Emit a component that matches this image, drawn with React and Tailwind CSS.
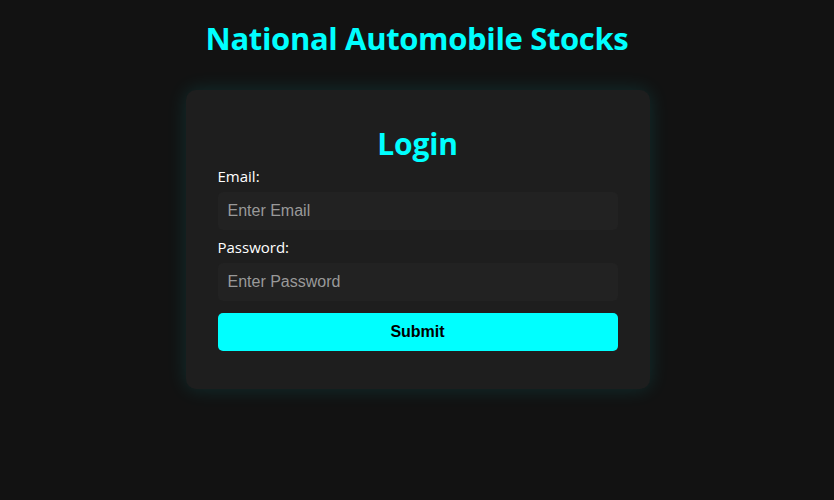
export default function App() {
  return (
    <div className="min-h-[500px] w-full bg-[#121212] flex flex-col items-center" style={{ fontFamily: '"Open Sans", "Noto Sans", sans-serif' }}>
      <h1 className="mt-[18px] text-[31px] leading-[40px] font-bold text-[#00ffff] tracking-[-0.35px]">National Automobile Stocks</h1>
      <div className="mt-[32px] ml-[1px] w-[464px] rounded-[10px] bg-[#1e1e1e] px-[32px] pt-[36px] pb-[38px] shadow-[0_0_20px_rgba(0,255,255,0.12)]">
        <h2 className="text-center text-[30px] leading-[36px] font-bold text-[#00ffff] tracking-[-0.2px]">Login</h2>
        <div className="mt-[4px] text-[15px] leading-[20px] text-white">Email:</div>
        <input
          placeholder="Enter Email"
          className="mt-[6px] block w-full h-[38px] rounded-[5px] bg-[#222222] px-[10px] text-[16px] text-white placeholder:text-[#999999] outline-none"
          style={{ fontFamily: '"Liberation Sans", Arial, sans-serif' }}
        />
        <div className="mt-[7px] text-[15px] leading-[20px] text-white">Password:</div>
        <input
          type="password"
          placeholder="Enter Password"
          className="mt-[6px] block w-full h-[38px] rounded-[5px] bg-[#222222] px-[10px] text-[16px] text-white placeholder:text-[#999999] outline-none"
          style={{ fontFamily: '"Liberation Sans", Arial, sans-serif' }}
        />
        <button
          className="mt-[12px] block w-full h-[38px] rounded-[5px] bg-[#00ffff] text-[16px] font-bold text-black"
          style={{ fontFamily: '"Liberation Sans", Arial, sans-serif' }}
        >
          Submit
        </button>
      </div>
    </div>
  );
}
